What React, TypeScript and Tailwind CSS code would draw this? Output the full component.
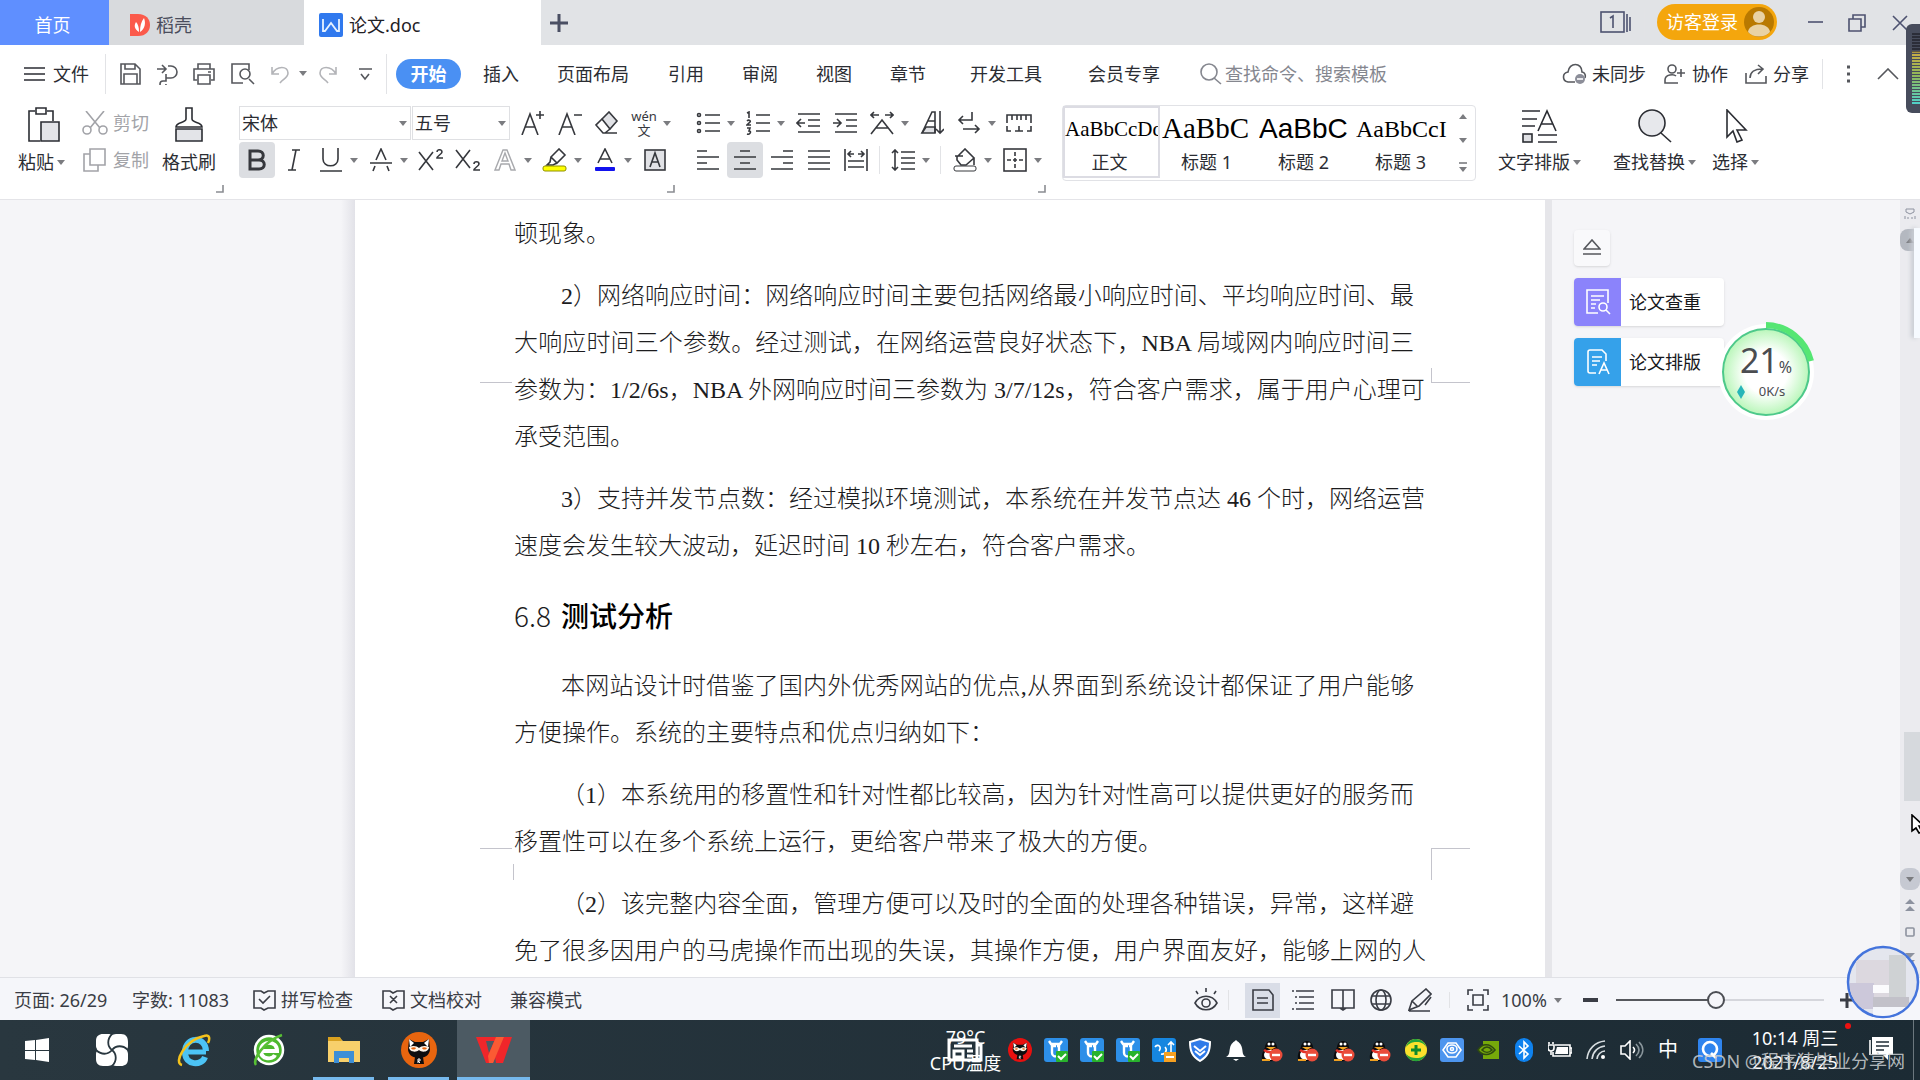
import { useState, type ReactNode } from "react";
import clsx from "clsx";

const UI_FONT = "font-['Noto_Sans','Noto_Sans_CJK_SC',sans-serif]";
const DOC_FONT = "font-['Liberation_Serif','Noto_Sans_CJK_SC',serif]";

/* ---------- icon helpers ---------- */

function Svg({
  w = 24,
  h = 24,
  box,
  sw = 1.6,
  className,
  children,
}: {
  w?: number;
  h?: number;
  box?: string;
  sw?: number;
  className?: string;
  children: ReactNode;
}) {
  return (
    <svg
      width={w}
      height={h}
      viewBox={box ?? `0 0 ${w} ${h}`}
      fill="none"
      stroke="currentColor"
      strokeWidth={sw}
      className={clsx("shrink-0", className)}
      aria-hidden="true"
    >
      {children}
    </svg>
  );
}

function Caret({ className }: { className?: string }) {
  return (
    <svg width="8" height="5" viewBox="0 0 8 5" className={clsx("shrink-0", className)} aria-hidden="true">
      <path d="M0 0h8L4 5z" fill="#7b7c80" />
    </svg>
  );
}

function Tool({
  label,
  active,
  muted,
  children,
}: {
  label: string;
  active?: boolean;
  muted?: boolean;
  children: ReactNode;
}) {
  return (
    <button
      type="button"
      aria-label={label}
      aria-pressed={active}
      className={clsx(
        "flex h-9 w-9 shrink-0 items-center justify-center rounded-sm",
        active && "bg-[#dcdee2]",
        muted ? "text-[#a8a9ad]" : "text-[#36383d]",
      )}
    >
      {children}
    </button>
  );
}

function Drop({ label }: { label: string }) {
  return (
    <button type="button" aria-label={label} className="flex h-9 w-3 shrink-0 items-center justify-start">
      <Caret />
    </button>
  );
}

function Divider({ className }: { className?: string }) {
  return <span className={clsx("w-px shrink-0 bg-[#e2e3e6]", className)} />;
}

/* ---------- title bar ---------- */

function TitleBar() {
  return (
    <header className="flex h-[45px] shrink-0 items-stretch bg-[#e1e3e6] text-lg">
      <button type="button" className="w-[109px] bg-[#5f8fff] pr-1 pt-1 text-white">
        首页
      </button>
      <button type="button" className="flex w-[195px] items-center gap-[6px] bg-[#d8dadd] pl-[21px] pt-1 text-[#4a4d5c]">
        <Svg w={20} h={22}>
          <path d="M0 0h8c8 0 12 5 12 11s-4 11-12 11H0z" fill="#fb5a4b" stroke="none" />
          <path d="M9 18C4 15 4 11 6 8c2 2 3 5 3 10zm1 0c0-6 1-10 4-14 2 5 1 11-4 14z" fill="#fff" stroke="none" />
        </Svg>
        稻壳
      </button>
      <button type="button" className="flex w-[237px] items-center gap-[6px] bg-white pl-[15px] pt-1 text-[#1f2126]">
        <Svg w={24} h={24}>
          <rect width="24" height="24" rx="2" fill="#3079ee" stroke="none" />
          <path d="M4 6v12h2l6-8 6 8h2V6" stroke="#e6f2ff" strokeWidth="1.8" />
        </Svg>
        论文.doc
      </button>
      <button type="button" aria-label="新建标签" className="flex w-9 items-center justify-center text-[#4a4f63]">
        <Svg w={18} h={18} sw={3}>
          <path d="M9 0v18M0 9h18" />
        </Svg>
      </button>
      <div className="flex-1" />
      <button type="button" aria-label="窗口列表" className="mr-3 flex items-center text-[#4d5270]">
        <Svg w={32} h={24}>
          <rect x="1" y="1" width="23" height="20" />
          <path d="M27 3v18M30 6v14M10 7l3-2v12" />
        </Svg>
      </button>
      <Divider className="my-2" />
      <button
        type="button"
        className="ml-3 mr-3 mt-1 flex h-9 w-[120px] items-center justify-between rounded-full bg-[#f4a60d] pl-[9px] pr-[3px] text-white"
      >
        访客登录
        <Svg w={30} h={30}>
          <circle cx="15" cy="15" r="15" fill="#b97900" stroke="none" />
          <circle cx="15" cy="10" r="6" fill="#e9d2a4" stroke="none" />
          <path d="M4 25c1-10 21-10 22 0-5 6-17 6-22 0z" fill="#e9d2a4" stroke="none" />
        </Svg>
      </button>
      <Divider className="my-2" />
      <button type="button" aria-label="最小化" className="ml-[18px] text-[#4d5270]">
        <Svg w={15} h={18}>
          <path d="M0 8h15" />
        </Svg>
      </button>
      <button type="button" aria-label="还原" className="ml-[25px] text-[#4d5270]">
        <Svg w={18} h={18}>
          <path d="M1 5h12v12H1zM5 5V1h12v12h-4" />
        </Svg>
      </button>
      <button type="button" aria-label="关闭" className="ml-[26px] mr-3 text-[#4d5270]">
        <Svg w={16} h={16}>
          <path d="M1 1l14 14M15 1L1 15" />
        </Svg>
      </button>
    </header>
  );
}

/* ---------- menu row ---------- */

const MENUS = [
  { name: "插入", gap: "ml-[22px]" },
  { name: "页面布局", gap: "ml-[38px]" },
  { name: "引用", gap: "ml-[39px]" },
  { name: "审阅", gap: "ml-[38px]" },
  { name: "视图", gap: "ml-[38px]" },
  { name: "章节", gap: "ml-[38px]" },
  { name: "开发工具", gap: "ml-[44px]" },
  { name: "会员专享", gap: "ml-[46px]" },
];

function MenuBar() {
  return (
    <nav className="flex h-[57px] shrink-0 items-center whitespace-nowrap bg-white text-lg text-[#2b2d33]">
      <button type="button" className="flex w-[105px] items-center gap-2 pl-6">
        <Svg w={21} h={16}>
          <path d="M0 2h21M0 8h21M0 14h21" />
        </Svg>
        文件
      </button>
      <Divider className="h-10" />
      <div className="ml-[12px] flex items-center gap-[1px] text-[#55575c]">
        <button type="button" aria-label="保存" className="w-9">
          <Svg w={24} h={22}>
            <path d="M3 1h14l5 5v15H3zM7 1v5h10V1M6 21V11h13v10" />
          </Svg>
        </button>
        <button type="button" aria-label="输出" className="w-9">
          <Svg w={24} h={22}>
            <path d="M2 6h8M7 2l4 4-4 4M13 3h3a6 6 0 010 12h-5M11 21a3 3 0 11-3-3h3V11" />
          </Svg>
        </button>
        <button type="button" aria-label="打印" className="w-9">
          <Svg w={24} h={22}>
            <path d="M6 6V1h12v5M5 17H2V6h20v11h-3M6 12h12v9H6zM16 9h3" />
          </Svg>
        </button>
        <button type="button" aria-label="打印预览" className="w-9">
          <Svg w={26} h={22}>
            <path d="M20 7V1H3v19h11M20 16l5 5" />
            <circle cx="16" cy="11" r="5" />
          </Svg>
        </button>
        <button type="button" aria-label="撤销" className="ml-1 w-7 text-[#b3b4b8]">
          <Svg w={20} h={20}>
            <path d="M2 3v7h7M2 10C7 1 18 2 18 9c0 5-5 6-8 10" />
          </Svg>
        </button>
        <Drop label="撤销列表" />
        <button type="button" aria-label="恢复" className="ml-[6px] w-10 text-[#b3b4b8]">
          <Svg w={20} h={20}>
            <path d="M18 3v7h-7M18 10C13 1 2 2 2 9c0 5 5 6 8 10" />
          </Svg>
        </button>
        <button type="button" aria-label="自定义" className="w-[27px]">
          <Svg w={13} h={14}>
            <path d="M0 2h13M2 7l4 5 4-5" />
          </Svg>
        </button>
      </div>
      <Divider className="h-10" />
      <button type="button" className="ml-[9px] h-[30px] w-[65px] rounded-full bg-[#4a90f3] font-bold text-white">
        开始
      </button>
      {MENUS.map((m) => (
        <button type="button" key={m.name} className={m.gap}>
          {m.name}
        </button>
      ))}
      <label className="ml-10 flex flex-1 items-center gap-[2px] text-[#85878f]">
        <Svg w={23} h={22}>
          <circle cx="9" cy="9" r="8" />
          <path d="M14 15l7 6" />
        </Svg>
        <input
          type="search"
          aria-label="查找命令"
          placeholder="查找命令、搜索模板"
          className="min-w-0 flex-1 bg-transparent outline-none placeholder:text-[#85878f]"
        />
      </label>
      <button type="button" className="flex items-center gap-[5px]">
        <Svg w={25} h={22} className="text-[#55575c]">
          <path d="M13 19H6c-6-1-6-9 0-10 1-10 14-10 14 0 3 0 4 4 3 6" />
          <circle cx="18" cy="16" r="5" fill="#8c8e99" stroke="none" />
          <path d="M15 16h6" stroke="#fff" />
        </Svg>
        未同步
      </button>
      <button type="button" className="ml-[17px] flex items-center gap-[7px]">
        <Svg w={22} h={20} className="text-[#55575c]">
          <circle cx="9" cy="5" r="4" />
          <path d="M15 19H2v-3c0-6 9-6 11-4M14 9h8M18 5v8" />
        </Svg>
        协作
      </button>
      <button type="button" className="ml-[17px] flex items-center gap-[6px]">
        <Svg w={22} h={20} className="text-[#55575c]">
          <path d="M1 9v10h20v-7M5 14c0-6 5-9 12-9M13 1l5 4-5 5" />
        </Svg>
        分享
      </button>
      <Divider className="ml-[13px] h-[30px]" />
      <button type="button" aria-label="更多" className="ml-6 text-[#55575c]">
        <Svg w={4} h={18}>
          <path d="M0 2h3M0 9h3M0 16h3" strokeWidth="3" />
        </Svg>
      </button>
      <button type="button" aria-label="收起功能区" className="ml-[26px] mr-[21px] text-[#55575c]">
        <Svg w={22} h={12}>
          <path d="M1 11L11 1l10 10" />
        </Svg>
      </button>
    </nav>
  );
}

/* ---------- ribbon ---------- */

function CornerMark() {
  return (
    <Svg w={8} h={8} className="text-[#8b8d92]">
      <path d="M7 0v7H0" />
    </Svg>
  );
}

function ClipboardGroup() {
  return (
    <section className="relative flex w-[239px] shrink-0">
      <button type="button" className="ml-[18px] flex w-[52px] flex-col items-start whitespace-nowrap text-[#2b2d33]">
        <Svg w={34} h={36} className="ml-[9px] mt-[2px]">
          <path d="M13 34H2V4h6M20 4h6v10" />
          <path d="M9 1h10v6H9z" />
          <path d="M14 15h18v19H14z" fill="#e3e4e8" />
        </Svg>
        <span className="mt-[5px] flex items-center gap-[3px] leading-7">
          粘贴
          <Caret />
        </span>
      </button>
      <div className="ml-3 flex w-[72px] flex-col gap-px text-[#a2a3a8]">
        <button type="button" className="flex h-9 items-center gap-[5px] whitespace-nowrap">
          <Svg w={26} h={24}>
            <path d="M4 0l14 17M22 0L8 17" />
            <circle cx="5" cy="19" r="4" />
            <circle cx="21" cy="19" r="4" />
          </Svg>
          剪切
        </button>
        <button type="button" className="flex h-9 items-center gap-[5px] whitespace-nowrap">
          <Svg w={26} h={24}>
            <path d="M8 1h15v16H8zM8 6H2v17h14v-6" />
          </Svg>
          复制
        </button>
      </div>
      <button type="button" className="flex w-[66px] flex-col items-center whitespace-nowrap pl-1 text-[#2b2d33]">
        <Svg w={30} h={36} className="mt-[2px]">
          <path d="M12 1h6v11c0 4 10 3 10 8H2c0-5 10-4 10-8z" />
          <path d="M2 22h26v12H2z" fill="#e3e4e8" />
        </Svg>
        <span className="mt-[5px] leading-7">格式刷</span>
      </button>
      <button type="button" aria-label="剪贴板设置" className="absolute right-[15px] bottom-[6px]">
        <CornerMark />
      </button>
    </section>
  );
}

function FontGroup() {
  return (
    <section className="relative flex w-[451px] shrink-0 flex-col gap-px">
      <div className="flex items-center gap-px">
        <label className="relative h-[34px] w-[172px] border border-[#dfe0e3]">
          <select aria-label="字体" className="h-full w-full appearance-none bg-white pl-[2px] text-lg text-[#2b2d33]">
            <option>宋体</option>
          </select>
          <Caret className="absolute top-[14px] right-[3px]" />
        </label>
        <label className="relative mr-[4px] h-[34px] w-[98px] border border-[#dfe0e3]">
          <select aria-label="字号" className="h-full w-full appearance-none bg-white pl-[2px] text-lg text-[#2b2d33]">
            <option>五号</option>
          </select>
          <Caret className="absolute top-[14px] right-[3px]" />
        </label>
        <Tool label="增大字号">
          <Svg w={24} h={24}>
            <path d="M1 24L9 3l8 21M4 16h10M15 4h8M19 0v8" />
          </Svg>
        </Tool>
        <Tool label="减小字号">
          <Svg w={24} h={24}>
            <path d="M1 24L9 3l8 21M4 16h10M16 4h8" />
          </Svg>
        </Tool>
        <Tool label="清除格式">
          <Svg w={24} h={24}>
            <path d="M7 8l7-7 8 9-7 8z" fill="#e1e2e6" />
            <path d="M7 8l-6 6 7 8h2l5-4M8 22h14" />
          </Svg>
        </Tool>
        <Tool label="拼音指南">
          <span className="flex flex-col items-center text-[13px] leading-[14px]">
            <span>wén</span>
            <span>文</span>
          </span>
        </Tool>
        <Drop label="拼音选项" />
      </div>
      <div className="flex items-center gap-px">
        <Tool label="加粗" active>
          <Svg w={20} h={22} sw={3}>
            <path d="M3 2h8c7 0 7 9 0 9H3zM3 11h9c7 0 7 9 0 9H3z" />
          </Svg>
        </Tool>
        <Tool label="倾斜">
          <Svg w={14} h={22}>
            <path d="M5 1h8M1 21h8M9 1L5 21" />
          </Svg>
        </Tool>
        <Tool label="下划线">
          <Svg w={22} h={24}>
            <path d="M3 0v11c0 9 15 9 15 0V0M0 23h22" />
          </Svg>
        </Tool>
        <Drop label="下划线样式" />
        <Tool label="删除线">
          <Svg w={22} h={24}>
            <path d="M6 12l5-11 5 11M0 15h22M5 18l-2 5M17 18l2 5" />
          </Svg>
        </Tool>
        <Drop label="删除线样式" />
        <Tool label="上标">
          <Svg w={26} h={22}>
            <path d="M1 3l14 18M15 3L1 21M19 3c0-3 5-3 5 0 0 2-5 4-5 6h6" />
          </Svg>
        </Tool>
        <Tool label="下标">
          <Svg w={26} h={22}>
            <path d="M1 1l14 18M15 1L1 19M19 15c0-3 5-3 5 0 0 2-5 4-5 6h6" />
          </Svg>
        </Tool>
        <Tool label="文字效果" muted>
          <Svg w={22} h={22} sw={1.4}>
            <path d="M1 21L9 1h4l8 20h-4l-2-6H7l-2 6zM8 12h6l-3-8z" />
          </Svg>
        </Tool>
        <Drop label="文字效果选项" />
        <Tool label="突出显示">
          <Svg w={26} h={24}>
            <path d="M9 9l8-8 6 6-8 8zM9 9l-1 5-3 3h6l4-2" />
            <rect x="1" y="18" width="23" height="5" rx="2" fill="#ffff00" stroke="#8f9000" strokeWidth="1" />
          </Svg>
        </Tool>
        <Drop label="突出显示颜色" />
        <Tool label="字体颜色">
          <Svg w={22} h={24}>
            <path d="M4 15l7-14 7 14M6 11h10" />
            <rect x="1" y="19" width="20" height="4" rx="1" fill="#1212ee" stroke="none" />
          </Svg>
        </Tool>
        <Drop label="字体颜色选项" />
        <Tool label="字符底纹">
          <Svg w={22} h={22}>
            <rect x="1" y="1" width="20" height="20" fill="#e1e2e6" />
            <path d="M6 18l5-14 5 14M8 13h6" />
          </Svg>
        </Tool>
      </div>
      <button type="button" aria-label="字体设置" className="absolute right-[15px] bottom-[6px]">
        <CornerMark />
      </button>
    </section>
  );
}

function ParagraphGroup() {
  return (
    <section className="relative flex w-[372px] shrink-0 flex-col gap-px">
      <div className="flex items-center gap-px">
        <Tool label="项目符号">
          <Svg w={24} h={22}>
            <path d="M9 3h15M9 11h15M9 19h15" />
            <circle cx="3" cy="3" r="1.5" />
            <circle cx="3" cy="11" r="1.5" />
            <circle cx="3" cy="19" r="1.5" />
          </Svg>
        </Tool>
        <Drop label="项目符号样式" />
        <Tool label="编号">
          <Svg w={24} h={24}>
            <path d="M10 4h14M10 12h14M10 20h14M1 2l2-1v6M1 10c2-2 4 0 3 1L1 14h4M1 17h3l-1 3c3 0 1 4-2 3" />
          </Svg>
        </Tool>
        <Drop label="编号样式" />
        <Tool label="减少缩进">
          <Svg w={24} h={22}>
            <path d="M2 2h22M12 8h12M12 14h12M2 20h22M9 11H1M5 7l-4 4 4 4" />
          </Svg>
        </Tool>
        <Tool label="增加缩进">
          <Svg w={24} h={22}>
            <path d="M2 2h22M13 8h11M13 14h11M2 20h22M0 11h8M4 7l4 4-4 4" />
          </Svg>
        </Tool>
        <Tool label="中文版式">
          <Svg w={24} h={24}>
            <path d="M1 23L12 9l11 14M6 17h12M1 4h8M4 1L1 4l3 3M15 4h8M20 1l3 3-3 3" />
          </Svg>
        </Tool>
        <Drop label="中文版式选项" />
        <Tool label="排序">
          <Svg w={24} h={24}>
            <path d="M6 16h9v6H2z" fill="#dfe0e4" />
            <path d="M2 22L12 1h3v21M8 10h7M20 0v22M16 18l4 4 4-4" />
          </Svg>
        </Tool>
        <Tool label="换行">
          <Svg w={24} h={24}>
            <path d="M15 1v8H2M6 5L2 9l4 4M6 18h16M18 14l4 4-4 4" />
          </Svg>
        </Tool>
        <Drop label="换行选项" />
        <Tool label="制表位">
          <Svg w={26} h={18}>
            <path d="M1 9V1h24v8M6 1v5M11 1v5M15 1v5M20 1v5M1 12v5h4M9 17h8M13 12v5M21 17h4v-5" />
          </Svg>
        </Tool>
      </div>
      <div className="flex items-center gap-px">
        <Tool label="左对齐">
          <Svg w={22} h={22}>
            <path d="M0 2h10M0 8h22M0 14h10M0 20h22" />
          </Svg>
        </Tool>
        <Tool label="居中对齐" active>
          <Svg w={22} h={22}>
            <path d="M6 2h10M0 8h22M6 14h10M0 20h22" />
          </Svg>
        </Tool>
        <Tool label="右对齐">
          <Svg w={22} h={22}>
            <path d="M12 2h10M0 8h22M12 14h10M0 20h22" />
          </Svg>
        </Tool>
        <Tool label="两端对齐">
          <Svg w={22} h={22}>
            <path d="M0 2h22M0 8h22M0 14h22M0 20h22" />
          </Svg>
        </Tool>
        <Tool label="分散对齐">
          <Svg w={24} h={22}>
            <path d="M1 0v22M23 0v22M4 12h16M4 18h16M4 5h6M7 2L4 5l3 3M14 5h6M17 2l3 3-3 3" />
          </Svg>
        </Tool>
        <Divider className="mx-[4px] h-7" />
        <Tool label="行距">
          <Svg w={24} h={22}>
            <path d="M10 3h14M10 9h14M10 14h14M10 20h14M4 1v20M1 4l3-3 3 3M1 18l3 3 3-3" />
          </Svg>
        </Tool>
        <Drop label="行距选项" />
        <Divider className="mx-[5px] h-7" />
        <Tool label="底纹颜色">
          <Svg w={24} h={24}>
            <path d="M4 9l8-8 9 9-8 7H8l-4-5zM2 8h8M21 10v7" />
            <rect x="1" y="18" width="22" height="5" rx="2" fill="#fff" strokeWidth="1" />
          </Svg>
        </Tool>
        <Drop label="底纹选项" />
        <Tool label="边框">
          <Svg w={24} h={24}>
            <rect x="1" y="1" width="22" height="22" />
            <path d="M12 4v16M4 12h16" strokeDasharray="4 2" />
          </Svg>
        </Tool>
        <Drop label="边框选项" />
      </div>
      <button type="button" aria-label="段落设置" className="absolute right-[16px] bottom-[6px]">
        <CornerMark />
      </button>
    </section>
  );
}

const STYLES = [
  { name: "正文", sample: "AaBbCcDd", look: "font-['Liberation_Serif',serif] text-[21px]", selected: true },
  { name: "标题 1", sample: "AaBbC", look: "font-['Liberation_Serif',serif] text-[29px]" },
  { name: "标题 2", sample: "AaBbC", look: "font-['Liberation_Sans',sans-serif] text-[28px]" },
  { name: "标题 3", sample: "AaBbCcI", look: "font-['Liberation_Serif',serif] text-2xl" },
];

function StyleGallery() {
  return (
    <section className="flex h-[76px] w-[414px] shrink-0 rounded-sm border border-[#e1e2e6]">
      {STYLES.map((s) => (
        <button
          type="button"
          key={s.name}
          className={clsx(
            "flex w-[97px] shrink-0 flex-col items-center overflow-hidden border-2 text-[#2b2d33]",
            s.selected ? "h-[72px] border-[#dcdce3]" : "border-transparent",
          )}
        >
          <span className={clsx("flex h-[42px] w-full items-center overflow-hidden whitespace-nowrap text-black", s.look)}>
            {s.sample}
          </span>
          <span className="pr-1 leading-6">{s.name}</span>
        </button>
      ))}
      <div className="flex flex-1 flex-col items-center justify-between py-2">
        <button type="button" aria-label="上一行">
          <Caret className="rotate-180" />
        </button>
        <button type="button" aria-label="下一行">
          <Caret />
        </button>
        <button type="button" aria-label="展开样式">
          <Svg w={8} h={10}>
            <path d="M0 1h8" stroke="#7b7c80" />
            <path d="M0 5h8l-4 5z" fill="#7b7c80" stroke="none" />
          </Svg>
        </button>
      </div>
    </section>
  );
}

function BigButton({ label, className, children }: { label: string; className?: string; children: ReactNode }) {
  return (
    <button type="button" className={clsx("flex shrink-0 flex-col items-center whitespace-nowrap text-[#2b2d33]", className)}>
      <span className="mt-[3px] flex h-9 items-center">{children}</span>
      <span className="mt-[4px] flex items-center gap-[3px] leading-7">
        {label}
        <Caret />
      </span>
    </button>
  );
}

function Ribbon() {
  return (
    <div className="flex h-[98px] shrink-0 border-b border-[#e4e4e8] bg-white pt-[3px] text-lg">
      <ClipboardGroup />
      <FontGroup />
      <ParagraphGroup />
      <StyleGallery />
      <BigButton label="文字排版" className="ml-[22px]">
        <Svg w={36} h={34}>
          <path d="M0 2h18M0 10h15M0 17h13M16 22L25 2l9 20M19 15h12M16 26h19M16 33h19" />
          <rect x="1" y="25" width="9" height="8" fill="#dfe0e4" />
        </Svg>
      </BigButton>
      <BigButton label="查找替换" className="ml-8">
        <Svg w={34} h={34}>
          <circle cx="14" cy="14" r="13" fill="#e7e8ec" />
          <path d="M23 24l10 9" />
        </Svg>
      </BigButton>
      <BigButton label="选择" className="ml-4">
        <Svg w={24} h={34}>
          <path d="M3 1v27l6-6 4 11 5-2-5-10h9z" />
        </Svg>
      </BigButton>
    </div>
  );
}

/* ---------- document ---------- */

type Para = { indent?: boolean; lines: string[]; open?: boolean };

const BEFORE: Para[] = [
  { lines: ["顿现象。"] },
  {
    indent: true,
    lines: [
      "2）网络响应时间：网络响应时间主要包括网络最小响应时间、平均响应时间、最",
      "大响应时间三个参数。经过测试，在网络运营良好状态下，NBA 局域网内响应时间三",
      "参数为：1/2/6s，NBA 外网响应时间三参数为 3/7/12s，符合客户需求，属于用户心理可",
      "承受范围。",
    ],
  },
  {
    indent: true,
    lines: [
      "3）支持并发节点数：经过模拟环境测试，本系统在并发节点达 46 个时，网络运营",
      "速度会发生较大波动，延迟时间 10 秒左右，符合客户需求。",
    ],
  },
];

const AFTER: Para[] = [
  {
    indent: true,
    lines: [
      "本网站设计时借鉴了国内外优秀网站的优点,从界面到系统设计都保证了用户能够",
      "方便操作。系统的主要特点和优点归纳如下：",
    ],
  },
  {
    indent: true,
    lines: [
      "（1）本系统用的移置性和针对性都比较高，因为针对性高可以提供更好的服务而",
      "移置性可以在多个系统上运行，更给客户带来了极大的方便。",
    ],
  },
  {
    indent: true,
    open: true,
    lines: [
      "（2）该完整内容全面，管理方便可以及时的全面的处理各种错误，异常，这样避",
      "免了很多因用户的马虎操作而出现的失误，其操作方便，用户界面友好，能够上网的人",
    ],
  },
];

function Paragraph({ para }: { para: Para }) {
  return (
    <p className="mb-[15px]">
      {para.lines.map((line, i) => (
        <span
          key={line}
          className={clsx(
            "block whitespace-nowrap",
            para.indent && i === 0 && "pl-[47px]",
            (i < para.lines.length - 1 || para.open) && "text-justify [text-align-last:justify]",
          )}
        >
          {line}
        </span>
      ))}
    </p>
  );
}

function Page() {
  return (
    <main
      className={clsx(
        "relative w-[1190px] shrink-0 overflow-hidden bg-white pt-[11px] pr-[131px] pl-[159px] text-2xl leading-[47px] font-light text-[#1c1c1e]",
        DOC_FONT,
      )}
    >
      {BEFORE.map((p) => (
        <Paragraph key={p.lines[0]} para={p} />
      ))}
      <h2 className="mt-[22px] mb-[24px] flex gap-[10px] font-['Noto_Sans_CJK_SC',sans-serif] text-[28px]">
        <span className="font-light">6.8</span>
        <span className="font-medium text-black">测试分析</span>
      </h2>
      {AFTER.map((p) => (
        <Paragraph key={p.lines[0]} para={p} />
      ))}
      {/* crop marks of the text area */}
      <span className="absolute top-[182px] left-[125px] h-px w-8 bg-[#c4c4cc]" />
      <span className="absolute top-[168px] left-[1076px] h-[15px] w-[39px] border-b border-l border-[#c4c4cc]" />
      <span className="absolute top-[648px] left-[125px] h-px w-8 bg-[#c4c4cc]" />
      <span className="absolute top-[664px] left-[158px] h-4 w-px bg-[#c4c4cc]" />
      <span className="absolute top-[648px] left-[1076px] h-8 w-[39px] border-t border-l border-[#c4c4cc]" />
    </main>
  );
}

function SidePanel() {
  return (
    <aside className="relative flex flex-1 bg-[#f5f5f8]">
      <div className="w-[7px] bg-[#e6e6ea]" />
      <div className="flex flex-1 flex-col items-start gap-3 pt-[30px] pl-[22px] text-lg text-[#17181b]">
        <button type="button" aria-label="收起" className="flex h-9 w-9 items-center justify-center rounded-sm bg-[#f9f9fb] text-[#55575c] shadow">
          <Svg w={18} h={18}>
            <path d="M1 10L9 1l8 9zM0 15h18" />
          </Svg>
        </button>
        <button type="button" className="flex h-12 w-[150px] items-center overflow-hidden rounded-sm bg-white shadow">
          <span className="flex h-full w-[47px] items-center justify-center bg-[#8b83fb] text-white">
            <Svg w={26} h={26}>
              <path d="M13 24H2V1h21v13M6 7h13M6 11h9M6 15h5M6 19h4M21 21l4 4" />
              <circle cx="18" cy="18" r="4" />
            </Svg>
          </span>
          <span className="pl-2">论文查重</span>
        </button>
        <button type="button" className="flex h-12 w-[150px] items-center overflow-hidden rounded-sm bg-white shadow">
          <span className="flex h-full w-[47px] items-center justify-center bg-[#35a1ea] text-white">
            <Svg w={24} h={26}>
              <path d="M10 24H4a2 2 0 01-2-2V3c0-1 1-2 2-2h12l4 4v7M6 8h10M6 12h8M6 16h5M13 25l5-11 5 11M15 21h6" />
            </Svg>
          </span>
          <span className="pl-2">论文排版</span>
        </button>
      </div>
      <ScrollRail />
      {/* floating memory ball */}
      <div className="absolute top-[121px] left-[171px] h-[102px] w-[102px]">
        <svg width="102" height="102" viewBox="0 0 102 102" className="absolute inset-0" aria-hidden="true">
          <defs>
            <radialGradient id="ball">
              <stop offset="0.5" stopColor="#ffffff" />
              <stop offset="1" stopColor="#b9f6b9" />
            </radialGradient>
          </defs>
          <circle cx="50" cy="51" r="48" fill="#fff" />
          <circle cx="50" cy="51" r="43" fill="url(#ball)" stroke="#4dc98a" strokeWidth="2" />
          <path d="M50 4a47 47 0 0 1 45 36" fill="none" stroke="#55e673" strokeWidth="6" />
          <path d="M25 64l4 7-4 7-4-7z" fill="#27b6b8" />
        </svg>
        <div className="relative flex h-full flex-col items-center pt-5 pr-[2px] text-[#4a4c50]">
          <span className="flex items-baseline text-[34px] leading-[38px]">
            21<span className="text-base">%</span>
          </span>
          <span className="mt-1 pl-3 text-[13px] leading-4">0K/s</span>
        </div>
      </div>
    </aside>
  );
}

function ScrollRail() {
  return (
    <div className="relative w-5 bg-[#ebebef]">
      <div className="flex h-full flex-col items-center text-[#8d929f]">
        <Svg w={12} h={12} className="mt-2">
          <path d="M2 1h8v3l-4 2-4-2zM1 8v3M4 9v2M8 9v2M11 8v3" strokeWidth="1" />
        </Svg>
        <button type="button" aria-label="向上滚动" className="mt-[9px] flex h-[22px] w-5 items-center justify-center rounded-lg bg-[#b4b8c0]">
          <Caret className="rotate-180" />
        </button>
        <div className="flex-[480]" />
        <div className="ml-1 w-4 flex-[69] bg-[#d6d9dd]" />
        <div className="flex-[67]" />
        <button type="button" aria-label="向下滚动" className="flex h-[22px] w-5 items-center justify-center rounded-lg bg-[#c6c9d2]">
          <Caret />
        </button>
        <button type="button" aria-label="上一页" className="mt-[9px]">
          <Svg w={10} h={12}>
            <path d="M0 5l5-5 5 5zM0 12l5-5 5 5z" fill="currentColor" stroke="none" />
          </Svg>
        </button>
        <button type="button" aria-label="选择浏览对象" className="mt-4">
          <Svg w={10} h={10}>
            <rect x="1" y="1" width="8" height="8" rx="1" />
          </Svg>
        </button>
        <button type="button" aria-label="下一页" className="mt-4 mb-3">
          <Svg w={10} h={12}>
            <path d="M0 0l5 5 5-5zM0 7l5 5 5-5z" fill="currentColor" stroke="none" />
          </Svg>
        </button>
      </div>
      <span className="absolute top-7 right-0 h-[110px] w-[6px] bg-[#f6faff] shadow-[-3px_0_4px_#c9cdd4]" />
      <Svg w={9} h={20} className="absolute top-[614px] right-0 text-black">
        <path d="M1 1v16l4-3 3 5 3-1-3-6h5z" fill="#fff" />
      </Svg>
    </div>
  );
}

/* ---------- status bar ---------- */

function StatusBar() {
  const [zoom, setZoom] = useState(48);

  return (
    <footer className="flex h-[43px] shrink-0 items-center border-t border-[#e0e1e6] bg-[#f5f6fa] pt-[2px] text-lg whitespace-nowrap text-[#3a3d45]">
      <button type="button" className="ml-[14px] w-[118px] text-left">
        页面: 26/29
      </button>
      <button type="button" className="w-[121px] text-left">
        字数: 11083
      </button>
      <button type="button" className="flex w-[129px] items-center gap-[5px]">
        <Svg w={23} h={22}>
          <path d="M1 2h7l3 2 4-2h7v17h-7l-4 2-3-2H1zM6 10l4 4 7-7" />
        </Svg>
        拼写检查
      </button>
      <button type="button" className="flex w-[128px] items-center gap-[5px]">
        <Svg w={23} h={22}>
          <path d="M1 2h7l3 2 4-2h7v17h-7l-4 2-3-2H1zM8 7l7 7M15 7l-7 7" />
        </Svg>
        文档校对
      </button>
      <span>兼容模式</span>
      <div className="flex-1" />
      <button type="button" aria-label="护眼模式" className="mr-[10px]">
        <Svg w={24} h={24}>
          <path d="M1 15c5-9 17-9 22 0-5 9-17 9-22 0zM12 0v4M2 3l2 3M22 3l-2 3" />
          <circle cx="12" cy="15" r="4" />
        </Svg>
      </button>
      <Divider className="mr-[16px] h-5" />
      <div className="flex items-center gap-[3px]">
        <button type="button" aria-label="页面视图" aria-pressed="true" className="flex h-[35px] w-[35px] items-center justify-center bg-[#d9dde7]">
          <Svg w={22} h={22}>
            <path d="M1 1h16l4 5v15H1zM5 9h11M5 14h11" />
          </Svg>
        </button>
        <button type="button" aria-label="大纲视图" className="flex h-[35px] w-[39px] items-center justify-center">
          <Svg w={22} h={22}>
            <path d="M4 2h18M7 8h15M7 14h15M4 20h18M0 2h2M3 8h2M3 14h2M0 20h2" />
          </Svg>
        </button>
        <button type="button" aria-label="阅读版式" className="flex h-[35px] w-[35px] items-center justify-center">
          <Svg w={24} h={22}>
            <path d="M1 1h11v18H1zM12 1h11v18H12M9 19l3 2 3-2" />
          </Svg>
        </button>
        <button type="button" aria-label="Web 版式" className="flex h-[35px] w-[35px] items-center justify-center">
          <Svg w={24} h={22}>
            <circle cx="12" cy="11" r="10" />
            <ellipse cx="12" cy="11" rx="5" ry="10" />
            <path d="M3 7h18M3 15h18" />
          </Svg>
        </button>
        <button type="button" aria-label="写作模式" className="flex h-[35px] w-[38px] items-center justify-center">
          <Svg w={24} h={24}>
            <path d="M1 22l3-9L18 1l5 5L11 18zM4 13l6 6M1 23h21M17 17l6-8" />
          </Svg>
        </button>
      </div>
      <Divider className="ml-[10px] h-4" />
      <button type="button" aria-label="最佳显示比例" className="ml-[17px]">
        <Svg w={22} h={22}>
          <path d="M1 6V1h5M16 1h5v5M21 16v5h-5M6 21H1v-5M6 6h10v10H6z" />
        </Svg>
      </button>
      <button type="button" className="ml-[12px] flex w-[82px] items-center gap-[7px]">
        100%
        <Caret />
      </button>
      <button type="button" aria-label="缩小">
        <Svg w={15} h={4} sw={4}>
          <path d="M0 2h15" />
        </Svg>
      </button>
      <label className="ml-[18px] flex">
        <input
          type="range"
          aria-label="显示比例"
          value={zoom}
          onChange={(e) => setZoom(Number(e.target.value))}
          className="h-5 w-[208px] appearance-none bg-[linear-gradient(to_right,#55575c_48%,#d5d6dc_48%)] bg-[length:100%_2px] bg-center bg-no-repeat [&::-webkit-slider-thumb]:h-[18px] [&::-webkit-slider-thumb]:w-[18px] [&::-webkit-slider-thumb]:appearance-none [&::-webkit-slider-thumb]:rounded-full [&::-webkit-slider-thumb]:border-2 [&::-webkit-slider-thumb]:border-[#4c4e54] [&::-webkit-slider-thumb]:bg-[#f5f5f9]"
        />
      </label>
      <button type="button" aria-label="放大" className="mr-[65px] ml-4">
        <Svg w={15} h={15} sw={3}>
          <path d="M0 7h15M7 0v15" />
        </Svg>
      </button>
    </footer>
  );
}

/* ---------- taskbar ---------- */

function TaskButton({
  label,
  open,
  active,
  className,
  children,
}: {
  label: string;
  open?: boolean;
  active?: boolean;
  className?: string;
  children: ReactNode;
}) {
  return (
    <button
      type="button"
      aria-label={label}
      className={clsx("flex h-full w-[73px] shrink-0 flex-col items-center justify-between", active && "bg-[#4c5a63]", className)}
    >
      <span className="flex flex-1 items-center pt-[2px]">{children}</span>
      <span className={clsx("h-[3px]", active ? "w-full bg-[#76b9ed]" : "w-[61px]", open && "bg-[#76b9ed]")} />
    </button>
  );
}

function Cat({ size, badge }: { size: number; badge: string }) {
  return (
    <Svg w={size} h={size} box="0 0 36 36">
      <circle cx="18" cy="18" r="18" fill={badge} stroke="none" />
      <path d="M8 7l6 3h8l6-3 1 11c-1 6-6 8-11 8S8 24 7 18zM14 25h8l1 7H13z" fill="#0d0d0f" stroke="none" />
      <path d="M8 7l5 4-4 4zM28 7l-5 4 4 4z" fill="#fff" stroke="none" />
      <path d="M8 15c4-2 8-1 10 1 2-2 6-3 10-1 0 5-7 6-10 3-3 3-10 2-10-3z" fill="#fff6ea" stroke="none" />
      <path d="M10 16c2-1 4-1 5 0-1 2-4 2-5 0zM21 16c1-1 3-1 5 0-1 2-4 2-5 0z" fill="#e8650f" stroke="none" />
      <path d="M17 31v-4h2v2h-2l2 2" stroke="#fff" strokeWidth="1" />
    </Svg>
  );
}

function SyncApp() {
  return (
    <Svg w={24} h={24}>
      <rect width="24" height="24" rx="3" fill="#2d8fe8" stroke="none" />
      <path d="M5 3l2 3h9l2-3M8 7v8c0 3 3 4 5 3M7 8h5M13 8h2v5" stroke="#fff" strokeWidth="2.4" />
      <rect x="12" y="13" width="12" height="11" rx="1" fill="#28b32c" stroke="none" />
      <path d="M14 18l3 3 5-5" stroke="#fff" strokeWidth="2" />
    </Svg>
  );
}

function Penguin() {
  return (
    <Svg w={24} h={24}>
      <path d="M2 21c-1-5 2-9 3-12C6 1 16 1 17 9c1 4 4 6 3 11-5 4-13 4-18 1z" fill="#0c0c0e" stroke="none" />
      <ellipse cx="10" cy="17" rx="6" ry="5" fill="#fff" stroke="none" />
      <circle cx="9" cy="6" r="1.5" fill="#fff" stroke="none" />
      <circle cx="13" cy="6" r="1.5" fill="#fff" stroke="none" />
      <path d="M6 9h10l-5 3z" fill="#f5a623" stroke="none" />
      <path d="M4 12c4 3 10 3 13 0" stroke="#e3342b" strokeWidth="2.5" />
      <path d="M2 22h8" stroke="#f0a020" strokeWidth="2" />
      <circle cx="16" cy="17" r="6.5" fill="#ea4c3a" stroke="none" />
      <path d="M12 17h8" stroke="#fff" strokeWidth="2.4" />
    </Svg>
  );
}

const TRAY: { label: string; icon: ReactNode }[] = [
  { label: "猫盘", icon: <Cat size={24} badge="#e8100f" /> },
  { label: "同步一", icon: <SyncApp /> },
  { label: "同步二", icon: <SyncApp /> },
  { label: "同步三", icon: <SyncApp /> },
  {
    label: "驱动",
    icon: (
      <Svg w={24} h={24}>
        <rect width="24" height="24" rx="3" fill="#1686e0" stroke="none" />
        <path d="M3 9c3-4 7 0 4 4M9 16c4 1 7-4 4-7M19 14V4M16 7l3-3 3 3" stroke="#fff" />
        <rect x="12" y="14" width="12" height="10" fill="#f6a021" stroke="none" />
        <path d="M14 19h8" stroke="#fff" strokeWidth="2" />
      </Svg>
    ),
  },
  {
    label: "电脑管家",
    icon: (
      <Svg w={24} h={24}>
        <path d="M12 1l10 3c0 9-2 14-10 19C4 18 2 13 2 4z" fill="#2f7ae8" stroke="#fff" strokeWidth="2" />
        <path d="M6 8l6 5 6-5M7 13l5 4 5-4" stroke="#fff" strokeWidth="2" />
      </Svg>
    ),
  },
  {
    label: "通知",
    icon: (
      <Svg w={22} h={22}>
        <path d="M1 18c4-2 3-5 4-9 1-5 4-6 6-8 2 2 5 3 6 8 1 4 0 7 4 9zM8 20h6l-3 2z" fill="#fff" stroke="none" />
      </Svg>
    ),
  },
  { label: "QQ 一", icon: <Penguin /> },
  { label: "QQ 二", icon: <Penguin /> },
  { label: "QQ 三", icon: <Penguin /> },
  { label: "QQ 四", icon: <Penguin /> },
  {
    label: "安全卫士",
    icon: (
      <Svg w={24} h={24}>
        <circle cx="12" cy="12" r="11" fill="#fbe12c" stroke="none" />
        <path d="M2 9C5-2 20-1 22 9c-3-5-7-5-10-5S5 5 2 9zM2 16c4 10 17 9 20 0-3 4-7 4-10 4s-7-1-10-4z" fill="#23a43b" stroke="none" />
        <path d="M12 7v10M7 12h10" stroke="#0f8a2c" strokeWidth="3" />
      </Svg>
    ),
  },
  {
    label: "设置助手",
    icon: (
      <Svg w={24} h={24}>
        <rect width="24" height="24" rx="3" fill="#4d95ee" stroke="none" />
        <path d="M8 5h8l5 7-5 7H8l-5-7z" stroke="#fff" />
        <ellipse cx="12" cy="11" rx="5" ry="4" stroke="#fff" />
        <circle cx="12" cy="11" r="1.5" stroke="#fff" />
      </Svg>
    ),
  },
  {
    label: "NVIDIA",
    icon: (
      <Svg w={22} h={20}>
        <rect x="6" y="1" width="16" height="18" fill="#76a90a" stroke="none" />
        <path d="M1 10c4-7 12-7 17 0-5 6-13 6-17 0zM5 10c3-4 7-4 10 0-3 3-7 3-10 0z" stroke="#2f4a10" fill="#76a90a" />
      </Svg>
    ),
  },
  {
    label: "蓝牙",
    icon: (
      <Svg w={18} h={24}>
        <rect width="18" height="24" rx="9" fill="#0f82ee" stroke="none" />
        <path d="M4 8l9 8-4 4V4l4 4-9 8" stroke="#fff" />
      </Svg>
    ),
  },
  {
    label: "电源",
    icon: (
      <Svg w={24} h={18} className="text-white">
        <path d="M7 4h15v11H5v-4M22 7h2v5h-2M1 1v2M5 1v2M0 4h6v3a3 3 0 01-6 0zM3 10v4" />
        <path d="M9 6h11v7H7z" fill="#fff" stroke="none" />
      </Svg>
    ),
  },
  {
    label: "网络",
    icon: (
      <Svg w={20} h={20} className="text-[#d7dde0]">
        <path d="M1 19C2 9 9 2 19 1M6 19c1-7 5-12 13-13M11 19c0-4 4-8 8-8" />
        <circle cx="17" cy="17" r="2" fill="#fff" stroke="none" />
      </Svg>
    ),
  },
  {
    label: "音量",
    icon: (
      <Svg w={24} h={20} className="text-white">
        <path d="M1 6h4l5-5v18l-5-5H1zM13 7c2 2 2 4 0 6" />
        <path d="M16 4c4 4 4 8 0 12M19 2c5 5 5 11 0 16" stroke="#8b979d" />
      </Svg>
    ),
  },
  { label: "输入法", icon: <span className="text-xl leading-6 text-white">中</span> },
];

function Taskbar() {
  return (
    <footer className="relative flex h-[60px] shrink-0 items-stretch bg-linear-to-r from-[#29373f] to-[#1c2b34] text-lg text-white">
      <TaskButton label="开始菜单">
        <Svg w={24} h={24}>
          <path d="M0 3l10-1v10H0zM11 2l13-2v12H11zM0 13h10v9L0 21zM11 13h13v11l-13-2z" fill="#fff" stroke="none" />
        </Svg>
      </TaskButton>
      <TaskButton label="搜索" className="ml-[2px]">
        <Svg w={32} h={32}>
          <path
            d="M7 0h6c2 0 2 1 3 1s2-1 4-1h5c5 0 7 3 7 8v4c0 2-1 3-1 4s1 2 1 4v5c0 5-3 7-7 7h-5c-2 0-3-1-4-1s-2 1-4 1H7c-5 0-7-3-7-7v-5c0-2 1-2 1-4s-1-2-1-4V7c0-5 3-7 7-7z"
            fill="#fff"
            stroke="none"
          />
          <g stroke="#29373f" strokeWidth="1.8">
            <path d="M16 16c-5-4-5-11 0-16M16 16c4-5 11-5 16 0M16 16c5 4 5 11 0 16M16 16c-4 5-11 5-16 0" />
          </g>
        </Svg>
      </TaskButton>
      <TaskButton label="Internet Explorer" className="ml-[9px]">
        <Svg w={34} h={34}>
          <path d="M9 19h20" stroke="#4cc3f5" strokeWidth="5" />
          <path d="M29 18c0-15-21-15-21 1 0 14 17 14 20 5" stroke="#4cc3f5" strokeWidth="6" />
          <path d="M5 32C-4 30 8 7 27 3c6-2 6 3 4 7" stroke="#f4c21c" strokeWidth="2.5" />
        </Svg>
      </TaskButton>
      <TaskButton label="安全浏览器" className="ml-[2px]">
        <Svg w={34} h={34}>
          <circle cx="17" cy="17" r="14" fill="#4db82e" stroke="#fff" strokeWidth="2.5" />
          <path d="M10 18h15c0-11-16-11-16 0 0 9 12 9 14 4" stroke="#fff" strokeWidth="4" />
          <path d="M4 32C0 27 12 8 30 2" stroke="#58c035" strokeWidth="2.5" />
        </Svg>
      </TaskButton>
      <TaskButton label="文件资源管理器" open className="ml-[2px]">
        <Svg w={32} h={28}>
          <path d="M0 2h12l3 3h17v21H0z" fill="#f8d06b" stroke="none" />
          <path d="M0 1h12l2 4H0z" fill="#d9a11f" stroke="none" />
          <path d="M6 27V15h20v12h-5v-5H11v5z" fill="#3e8fd6" stroke="none" />
        </Svg>
      </TaskButton>
      <TaskButton label="猫盘" open className="ml-[2px]">
        <Cat size={36} badge="#e8650f" />
      </TaskButton>
      <TaskButton label="WPS 文字" open active className="ml-[2px]">
        <Svg w={36} h={28}>
          <path d="M0 1h21l-2 4H10l3 12 7-16h8L17 27h-7z" fill="#f0262a" stroke="none" />
          <path d="M28 1h8l-9 26h-7l-1-6z" fill="#f0262a" stroke="none" />
          <path d="M20 1h8L17 27h-4l-1-7z" fill="#fb5a33" stroke="none" />
        </Svg>
      </TaskButton>
      <div className="flex-1" />
      <div className="relative flex w-[73px] flex-col items-center justify-center whitespace-nowrap">
        <span className="leading-[26px]">79°C</span>
        <span className="leading-[26px]">CPU温度</span>
        <Svg w={36} h={26} sw={3} className="absolute top-[17px] left-[18px]">
          <path d="M2 3h28v20H2zM30 8h4v15H8M7 9h18M7 14h9v6H7zM20 14h6M20 19h6" />
        </Svg>
      </div>
      <div className="flex">
        {TRAY.map((t) => (
          <button type="button" key={t.label} aria-label={t.label} className="flex w-9 items-center justify-center">
            {t.icon}
          </button>
        ))}
      </div>
      <button type="button" aria-label="搜狗输入法" className="ml-[6px] flex w-9 items-center justify-center">
        <Svg w={24} h={24}>
          <rect width="24" height="24" rx="3" fill="#2f84ee" stroke="none" />
          <circle cx="12" cy="11" r="7" stroke="#fff" strokeWidth="2.6" />
          <path d="M13 15l5 5" stroke="#fff" strokeWidth="2.6" />
        </Svg>
      </button>
      <time className="ml-4 flex w-[102px] flex-col items-center justify-center whitespace-nowrap">
        <span className="leading-6">10:14 周三</span>
        <span className="leading-6">2021/8/25</span>
      </time>
      <button type="button" aria-label="操作中心" className="ml-[23px] flex w-6 items-start pt-[17px]">
        <Svg w={24} h={24}>
          <path d="M3 0h21v18h-5v5l-5-5H3z" fill="#fff" stroke="none" />
          <path d="M7 5h13M7 9h13M7 13h8" stroke="#1f2d36" />
          <path d="M1 3v15" stroke="#fff" />
        </Svg>
      </button>
      <span className="ml-5 w-px bg-[#6b777e]" />
      <span className="w-[6px]" />
      <span className="absolute top-[3px] right-[69px] h-[6px] w-[6px] rounded-full bg-[#ee1111]" />
      <span className="absolute right-[15px] bottom-[5px] text-lg leading-7 whitespace-nowrap text-[#c3c8cb]/90">
        CSDN @程序猿毕业分享网
      </span>
    </footer>
  );
}

/* ---------- floating overlays ---------- */

function LevelMeter() {
  return (
    <div className="absolute top-6 right-0 h-[89px] w-[14px] rounded-l-md bg-[#474c5c] py-[9px] pl-[6px]">
      <div className="h-full bg-[repeating-linear-gradient(to_bottom,transparent_0_2px,#474c5c_2px_3px),linear-gradient(to_bottom,#2b2d38_25%,#c7ad45_28%,#8fb85a_60%,#4fd0c8)]" />
    </div>
  );
}

function FloatingAvatar() {
  return (
    <Svg w={74} h={74} className="absolute right-0 bottom-[61px]">
      <defs>
        <clipPath id="avatar">
          <circle cx="37" cy="37" r="34" />
        </clipPath>
      </defs>
      <circle cx="37" cy="37" r="35" fill="#e4e6ee" stroke="#4474dc" strokeWidth="2.5" />
      <g clipPath="url(#avatar)" stroke="none">
        <rect x="10" y="15" width="50" height="38" fill="#dcd8df" />
        <rect x="43" y="10" width="17" height="42" fill="#cfd2d4" />
        <rect x="4" y="38" width="24" height="26" fill="#ccc8da" />
        <rect x="27" y="40" width="16" height="8" fill="#fbfbfd" />
        <rect x="27" y="52" width="36" height="10" fill="#c2c1c9" />
        <rect x="27" y="62" width="40" height="12" fill="#f4f6fb" />
      </g>
    </Svg>
  );
}

export default function App() {
  return (
    <div className={clsx("relative flex h-screen min-h-[700px] flex-col overflow-hidden bg-white", UI_FONT)}>
      <TitleBar />
      <MenuBar />
      <Ribbon />
      <div className="flex min-h-0 flex-1 overflow-hidden bg-[#f5f5f8]">
        <div className="flex flex-[355] justify-end">
          <div className="w-[14px] bg-linear-to-r from-[#f5f5f8] to-[#e2e2e8]" />
        </div>
        <Page />
        <div className="flex flex-[375]">
          <SidePanel />
        </div>
      </div>
      <StatusBar />
      <Taskbar />
      <LevelMeter />
      <FloatingAvatar />
    </div>
  );
}
